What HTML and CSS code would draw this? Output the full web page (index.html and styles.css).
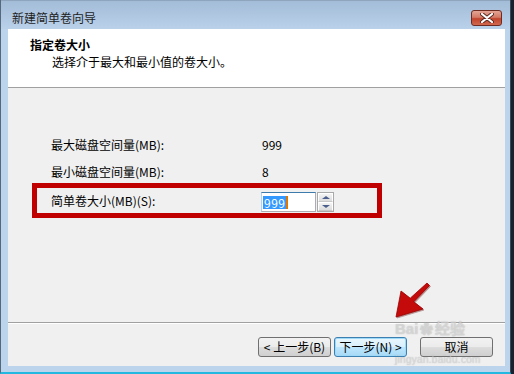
FILE: index.html
```html
<!DOCTYPE html>
<html lang="zh-CN">
<head>
    <meta charset="UTF-8">
    <title>新建简单卷向导</title>
    <link rel="stylesheet" href="styles.css">
</head>
<body>
    <div class="window">
        <div class="titlebar">
            <span class="title">新建简单卷向导</span>
            <button type="button" class="close-button">
                <svg width="14" height="10" viewBox="0 0 14 10">
                    <path d="M2,1 L12,9 M12,1 L2,9" stroke="#5a2a22" stroke-width="4" stroke-linecap="round"/>
                    <path d="M2,1 L12,9 M12,1 L2,9" stroke="#ffffff" stroke-width="2.2" stroke-linecap="round"/>
                </svg>
            </button>
        </div>

        <div class="client">
            <!-- Wizard header -->
            <div class="wizard-header">
                <div class="wizard-title">指定卷大小</div>
                <div class="wizard-subtitle">选择介于最大和最小值的卷大小。</div>
            </div>

            <div class="wizard-body">
                <div class="field-row">
                    <span class="field-label">最大磁盘空间量(MB):</span>
                    <span class="field-value">999</span>
                </div>
                <div class="field-row">
                    <span class="field-label">最小磁盘空间量(MB):</span>
                    <span class="field-value">8</span>
                </div>
                <div class="field-row highlight">
                    <label class="field-label" for="size">简单卷大小(MB)(S):</label>
                    <div class="spin">
                        <div class="spin-input" id="size"><span class="selected">999</span><span class="caret"></span></div>
                        <div class="spin-buttons">
                            <span class="spin-btn"><span class="tri-up"></span></span>
                            <span class="spin-btn"><span class="tri-down"></span></span>
                        </div>
                    </div>
                </div>
            </div>

            <div class="wizard-footer">
                <button type="button" class="btn">&lt; 上一步(B)</button>
                <button type="button" class="btn btn-focus">下一步(N) &gt;</button>
                <button type="button" class="btn btn-cancel">取消</button>
            </div>
        </div>

        <!-- red pointer arrow drawn over the dialog -->
        <svg class="pointer" width="50" height="44" viewBox="0 0 50 44">
            <path d="M39,5 L41.5,7.5 L25.8,23.8 L35,31 L8,39 L13,13 L22.2,20.2 Z" fill="#c40a0a" stroke="#9a0000" stroke-width="0.8"/>
        </svg>

        <div class="watermark">
            <div class="wm-logo">Bai<span class="wm-paw">&#10047;</span>经验</div>
            <div class="wm-url">jingyan.baidu.com</div>
        </div>
    </div>
</body>
</html>
```

FILE: styles.css
```css
body {
    margin: 0;
    background-color: #18222e;
    font-family: "Noto Sans CJK SC", "Liberation Sans", sans-serif;
    font-size: 12px;
    color: #000;
}

.window {
    position: relative;
    width: 497px;
    height: 366px;
    padding: 0 5px 6px 7px;
    background-color: #bcd4ec;
    border-left: 1px solid #56687c;
    border-right: 1px solid #3a4958;
    border-bottom: 2px solid #22b8e0;
    display: flex;
    flex-direction: column;
}

.titlebar {
    flex-shrink: 0;
    height: 29px;
    margin: 0 -5px 0 -7px;
    padding: 0 8px 0 11px;
    background: linear-gradient(#a3bcd7, #bad1ea);
    border-top: 1px solid #8ea5bd;
    box-sizing: border-box;
    display: flex;
    align-items: center;
    justify-content: space-between;
}

.title {
    color: #1e1e1e;
    font-size: 12px;
    margin-top: 4px;
}

.close-button {
    width: 31px;
    height: 16px;
    margin-top: 5px;
    padding: 0;
    border: 1px solid #6e2b22;
    border-radius: 3px;
    background: linear-gradient(#e4a595, #d47a66 45%, #c1432c 55%, #d0694e);
    display: flex;
    align-items: center;
    justify-content: center;
}

.client {
    flex-shrink: 0;
    width: 497px;
    height: 337px;
    background-color: #f0f0f0;
    display: flex;
    flex-direction: column;
}

.wizard-header {
    flex-shrink: 0;
    height: 59px;
    background-color: #fff;
    border-bottom: 1px solid #a0a0a0;
    padding: 8px 0 0 22px;
    box-sizing: border-box;
    line-height: 16px;
}

.wizard-title {
    font-weight: bold;
}

.wizard-subtitle {
    margin-left: 22px;
    margin-top: 1px;
}

.wizard-body {
    flex-shrink: 0;
    height: 235px;
    box-sizing: border-box;
    padding-top: 49px;
    border-bottom: 1px solid #a0a0a0;
    box-shadow: 0 1px 0 #fff;
}

.field-row {
    display: flex;
    align-items: center;
    line-height: 16px;
    margin-left: 43px;
    margin-bottom: 11px;
}

.field-row .field-label {
    width: 211px;
}

.field-row.highlight {
    margin-left: 24px;
    margin-top: -8px;
    margin-bottom: 0;
    width: 326px;
    height: 25px;
    border: 5px solid #c00000;
    padding-left: 14px;
}

.field-row.highlight .field-label {
    width: 210px;
}

.spin {
    display: flex;
    margin-top: 3px;
}

.spin-input {
    width: 52px;
    height: 18px;
    background-color: #fff;
    border: 1px solid #abadb3;
    border-top-color: #3d7bad;
    border-left-color: #b5cfe7;
    display: flex;
    align-items: center;
    padding-left: 1px;
}

.selected {
    background-color: #3399ff;
    color: #fff;
    line-height: 13px;
    padding: 0 1px;
    letter-spacing: 0.5px;
}

.caret {
    width: 2px;
    height: 13px;
    background-color: #e07800;
}

.spin-buttons {
    width: 17px;
    height: 20px;
    margin-left: 1px;
    border: 1px solid #a9a9a9;
    box-sizing: border-box;
    display: flex;
    flex-direction: column;
    background-color: #e8e8e8;
}

.spin-btn {
    flex: 1;
    display: flex;
    align-items: center;
    justify-content: center;
    background: linear-gradient(#f4f4f4, #dcdcdc);
    border: 1px solid #fff;
    border-bottom-color: #c8c8c8;
}

.tri-up {
    border-left: 4px solid transparent;
    border-right: 4px solid transparent;
    border-bottom: 3px solid #4c5f8c;
}

.tri-down {
    border-left: 4px solid transparent;
    border-right: 4px solid transparent;
    border-top: 3px solid #4c5f8c;
}

.wizard-footer {
    flex: 1;
    display: flex;
    justify-content: flex-end;
    align-items: flex-start;
    padding: 14px 12px 0 0;
}

.btn {
    width: 73px;
    height: 20px;
    padding: 0;
    font-family: inherit;
    font-size: 12px;
    line-height: 16px;
    color: #000;
    border: 1px solid #707070;
    border-radius: 3px;
    background: linear-gradient(#f2f2f2, #ebebeb 50%, #dddddd 51%, #cfcfcf);
    margin-left: 3px;
}

.btn-focus {
    border-color: #3c7fb1;
    background: linear-gradient(#eaf6fd, #d9f0fc 50%, #bee6fd 51%, #a7d9f5);
    box-shadow: inset 0 0 0 1px #9fd9f8;
}

.btn-cancel {
    margin-left: 13px;
}

.pointer {
    position: absolute;
    left: 387px;
    top: 278px;
    filter: drop-shadow(1px 1px 0 rgba(90, 0, 0, 0.4));
}

.watermark {
    position: absolute;
    left: 394px;
    top: 322px;
    color: rgba(235, 235, 235, 0.55);
    text-shadow: 0 0 1px rgba(120, 120, 120, 0.5);
    pointer-events: none;
}

.wm-logo {
    font-family: "Liberation Sans", sans-serif;
    font-size: 15px;
    font-weight: bold;
    line-height: 13px;
    height: 13px;
}

.wm-paw {
    font-size: 13px;
    margin: 0 2px;
}

.wm-url {
    font-family: "Liberation Sans", sans-serif;
    font-size: 10px;
    line-height: 8px;
    margin-top: 21px;
    letter-spacing: 0.3px;
}
```
